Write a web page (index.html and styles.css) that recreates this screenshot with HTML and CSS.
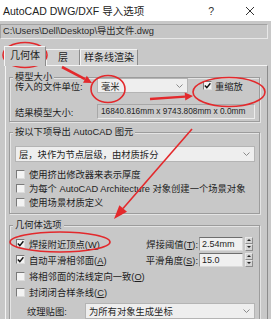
FILE: index.html
```html
<!DOCTYPE html>
<html>
<head>
<meta charset="utf-8">
<link rel="stylesheet" href="styles.css">
</head>
<body>
<div class="dialog">
  <div class="titlebar">
    <span class="title">AutoCAD DWG/DXF 导入选项</span>
    <span class="help">?</span>
    <svg class="close" width="10" height="10" viewBox="0 0 10 10"><path d="M1 1L9 9M9 1L1 9" stroke="#333" stroke-width="1" fill="none"/></svg>
  </div>
  <div class="path">C:\Users\Dell\Desktop\导出文件.dwg</div>
  <div class="tabs">
    <div class="tab active">几何体</div>
    <div class="tab t2">层</div>
    <div class="tab t3">样条线渲染</div>
  </div>
  <div class="panel">
    <div class="group g1">
      <div class="legend">模型大小</div>
      <div class="row r1">
        <span class="label">传入的文件单位:</span>
        <div class="select unit"><span>毫米</span><svg class="chev" width="7" height="4" viewBox="0 0 7 4"><path d="M0.5 0.5L3.5 3.5L6.5 0.5" stroke="#8a8a8a" fill="none"/></svg></div>
        <div class="check rescale"><span class="box"><svg width="7" height="7" viewBox="0 0 7 7"><path d="M0.8 3.6L2.8 5.6L6.4 1.2" stroke="#111" stroke-width="1.4" fill="none"/></svg></span><span>重缩放</span></div>
      </div>
      <div class="row r2">
        <span class="label">结果模型大小:</span>
        <div class="readonly">16840.816mm x 9743.808mm x 0.0mm</div>
      </div>
    </div>

    <div class="group g2">
      <div class="legend">按以下项导出 AutoCAD 图元</div>
      <div class="select wide"><span>层，块作为节点层级，由材质拆分</span><svg class="chev" width="7" height="4" viewBox="0 0 7 4"><path d="M0.5 0.5L3.5 3.5L6.5 0.5" stroke="#8a8a8a" fill="none"/></svg></div>
      <div class="check crow first"><span class="box"></span><span>使用挤出修改器来表示厚度</span></div>
      <div class="check crow"><span class="box"></span><span>为每个 AutoCAD Architecture 对象创建一个场景对象</span></div>
      <div class="check crow"><span class="box"></span><span>使用场景材质定义</span></div>
    </div>

    <div class="group g3">
      <div class="legend">几何体选项</div>
      <div class="orow o1">
        <div class="check"><span class="box"><svg width="7" height="7" viewBox="0 0 7 7"><path d="M0.8 3.6L2.8 5.6L6.4 1.2" stroke="#111" stroke-width="1.4" fill="none"/></svg></span><span>焊接附近顶点(<u>W</u>)</span></div>
        <span class="rlabel">焊接阈值(<u>T</u>):</span>
        <div class="num">2.54mm</div>
        <div class="spin"><span class="up"></span><span class="dn"></span></div>
      </div>
      <div class="orow o2">
        <div class="check"><span class="box"><svg width="7" height="7" viewBox="0 0 7 7"><path d="M0.8 3.6L2.8 5.6L6.4 1.2" stroke="#111" stroke-width="1.4" fill="none"/></svg></span><span>自动平滑相邻面(<u>A</u>)</span></div>
        <span class="rlabel">平滑角度(<u>S</u>):</span>
        <div class="num">15.0</div>
        <div class="spin"><span class="up"></span><span class="dn"></span></div>
      </div>
      <div class="check orow o3"><span class="box"></span><span>将相邻面的法线定向一致(<u>O</u>)</span></div>
      <div class="check orow o4"><span class="box"></span><span>封闭闭合样条线(<u>C</u>)</span></div>
      <div class="row tex">
        <span class="label tl">纹理贴图:</span>
        <div class="select texsel"><span>为所有对象生成坐标</span><svg class="chev" width="7" height="4" viewBox="0 0 7 4"><path d="M0.5 0.5L3.5 3.5L6.5 0.5" stroke="#8a8a8a" fill="none"/></svg></div>
      </div>
    </div>
  </div>

  <svg class="annot" width="271" height="319" viewBox="0 0 271 319">
    <g fill="none" stroke="#e3292c" stroke-width="1.6">
      <ellipse cx="25" cy="55" rx="22" ry="12.5"/>
      <ellipse cx="108" cy="89" rx="17" ry="13.5"/>
      <ellipse cx="229" cy="92" rx="36" ry="14.5"/>
      <ellipse cx="60" cy="242" rx="50" ry="10"/>
      <path d="M62 67L85 79.2" stroke-width="2.6"/>
      <path d="M150 99L185 96.6" stroke-width="2.4"/>
      <path d="M192 129L123 208.4" stroke-width="1.6"/>
    </g>
    <g fill="#e3292c">
      <path d="M92 83L83 82.7L86.8 75.7Z"/>
      <path d="M193 96L185.3 100.6L184.7 92.6Z"/>
      <path d="M114 219L127 211.7L119.4 205.2Z"/>
    </g>
  </svg>
</div>
</body>
</html>
```

FILE: styles.css
```css
* { box-sizing: border-box; }
html, body { margin: 0; padding: 0; }
body {
  width: 271px;
  height: 319px;
  overflow: hidden;
  background: #c8c8c8;
  font-family: "Liberation Sans", "Noto Sans CJK SC", sans-serif;
  font-size: 9.3px;
  color: #1e1e1e;
}
u { text-decoration: underline; }
.dialog { position: relative; width: 271px; height: 319px; overflow: hidden; }

.titlebar {
  height: 21px;
  background: #ffffff;
  display: flex;
  align-items: center;
  padding-left: 3px;
}
.title { flex: 1; font-size: 10.5px; color: #222; }
.help { font-size: 10.5px; color: #333; margin-right: 31px; }
.close { margin-right: 16px; }

.path {
  margin: 3px 3px 0 0;
  height: 15px;
  line-height: 13px;
  padding-left: 2px;
  border-top: 1px solid #a2a2a2;
  border-left: 1px solid #a2a2a2;
  border-right: 1px solid #e8e8e8;
  border-bottom: 1px solid #e8e8e8;
  background: #c6c6c6;
  color: #2a2a2a;
}

.tabs {
  display: flex;
  align-items: flex-start;
  height: 19px;
  margin-top: 7px;
  padding-left: 4px;
}
.tab {
  height: 16px;
  margin-top: 3px;
  line-height: 15px;
  font-size: 10px;
  text-align: center;
  background: #cfcfcf;
  border-top: 1px solid #f4f4f4;
  border-left: 1px solid #f4f4f4;
  border-right: 1px solid #8c8c8c;
}
.tab.active {
  position: relative;
  z-index: 1;
  width: 42px;
  height: 20px;
  margin-top: 0;
  line-height: 18px;
  background: #c8c8c8;
}
.t2 { width: 34px; }
.t3 { width: 58px; background: #d6d6d6; }

.panel {
  margin: 0 3px 0 5px;
  height: 260px;
  border-top: 1px solid #f4f4f4;
  border-left: 1px solid #f4f4f4;
  border-right: 1px solid #8c8c8c;
  padding-top: 0;
  overflow: hidden;
}

.group {
  margin: 11px 7px 0 3px;
  border: 1px solid #9c9c9c;
  box-shadow: inset 1px 1px 0 #e4e4e4, 1px 1px 0 #e4e4e4;
}
.legend {
  width: fit-content;
  height: 11px;
  line-height: 11px;
  margin: -6px 0 0 3px;
  padding: 0 2px;
  background: #c8c8c8;
}

.row { display: flex; align-items: center; height: 15px; padding-left: 5px; }
.r1 { margin-top: -5px; }
.r2 { margin-top: 11px; }
.g1 { padding-bottom: 2px; }
.label { width: 82px; flex: none; }

.select {
  display: flex;
  align-items: center;
  justify-content: space-between;
  height: 15px;
  padding: 0 4px 0 3px;
  background: #eeeeee;
  border: 1px solid #b4b4b4;
}
.select.unit { width: 91px; }
.chev { flex: none; }

.readonly {
  width: 158px;
  height: 15px;
  line-height: 13px;
  padding-left: 3px;
  font-size: 8.3px;
  background: #cbcbcb;
  border-top: 1px solid #a8a8a8;
  border-left: 1px solid #a8a8a8;
  border-right: 1px solid #ececec;
  border-bottom: 1px solid #ececec;
}

.check { display: flex; align-items: center; }
.box {
  flex: none;
  width: 9px;
  height: 9px;
  margin-right: 4px;
  background: #f3f3f3;
  border-top: 1px solid #7a7a7a;
  border-left: 1px solid #7a7a7a;
  border-right: 1px solid #dcdcdc;
  border-bottom: 1px solid #dcdcdc;
  display: flex;
  align-items: center;
  justify-content: center;
}
.rescale { margin-left: 15px; }
.rescale .box { margin-right: 3px; }

.g2 { margin-top: 10px; padding-bottom: 4px; }
.select.wide { width: 240px; height: 16px; margin: 8px 0 0 5px; }
.crow { height: 14px; padding-left: 6px; }
.crow.first { margin-top: 5px; }

.g3 { margin-top: 11px; height: 120px; }
.orow { display: flex; align-items: center; height: 15px; padding-left: 6px; padding-right: 6px; }
.orow > .check { flex: 1; }
.o1 { margin-top: 5px; }
.o2 { margin-top: 1px; }
.o3 { margin-top: 2px; height: 14px; }
.o4 { margin-top: 2px; height: 14px; }
.rlabel { margin-right: 1px; }
.num {
  width: 44px;
  height: 14px;
  line-height: 12px;
  padding-left: 2px;
  font-size: 9px;
  background: #f0f0f0;
  border-top: 1px solid #6e6e6e;
  border-left: 1px solid #9a9a9a;
  border-right: 1px solid #dadada;
  border-bottom: 1px solid #dadada;
}
.spin {
  width: 8px;
  height: 14px;
  margin-left: 2px;
  display: flex;
  flex-direction: column;
}
.spin span {
  flex: 1;
  display: flex;
  align-items: center;
  justify-content: center;
  background: #d4d4d4;
  border: 1px solid #e8e8e8;
  border-right-color: #8c8c8c;
  border-bottom-color: #8c8c8c;
}
.spin .up::after {
  content: "";
  border-left: 2px solid transparent;
  border-right: 2px solid transparent;
  border-bottom: 2px solid #222;
}
.spin .dn::after {
  content: "";
  border-left: 2px solid transparent;
  border-right: 2px solid transparent;
  border-top: 2px solid #222;
}

.tex { margin-top: 4px; height: 16px; padding-left: 0; }
.tl { width: 75px; padding-left: 17px; }
.select.texsel { width: 170px; height: 16px; }

.annot { position: absolute; left: 0; top: 0; pointer-events: none; }
```
